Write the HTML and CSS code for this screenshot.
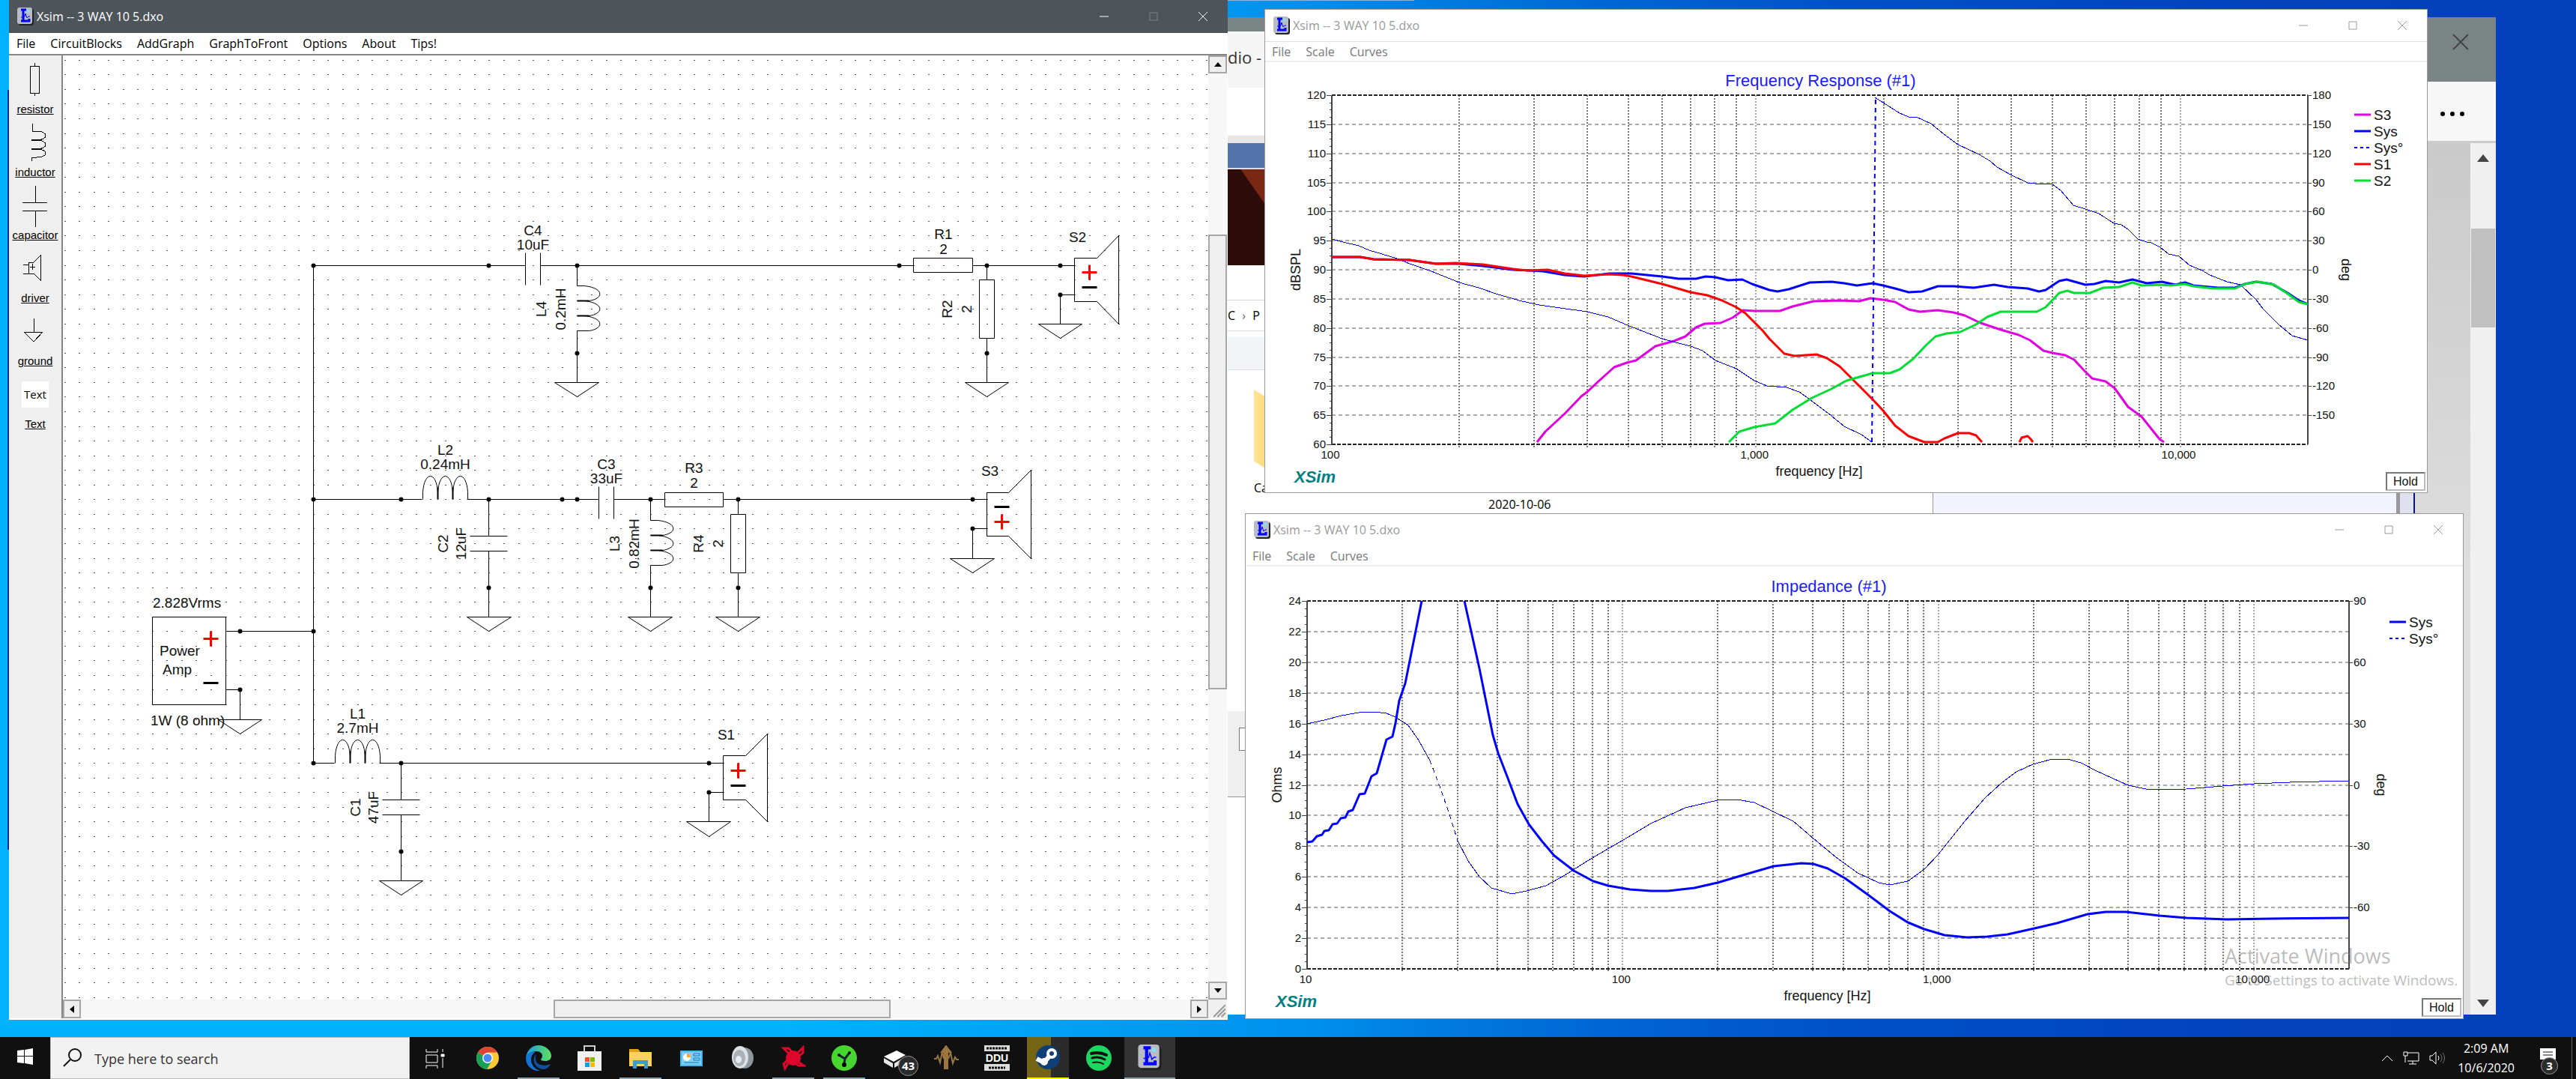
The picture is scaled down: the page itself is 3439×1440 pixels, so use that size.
FILE: index.html
```html
<!DOCTYPE html>
<html lang="en">
<head>
    <meta charset="UTF-8">
    <meta name="viewport" content="width=device-width, initial-scale=1.0">
    <title>Xsim -- 3 WAY 10 5.dxo</title>
    <link rel="stylesheet" href="styles.css">
</head>
<body>
    <!-- shared app icon -->
    <svg width="0" height="0" class="defs">
        <symbol id="xsim-icon" viewBox="0 0 22 24">
            <rect x="2" y="2" width="20" height="22" rx="3" fill="#222"/>
            <rect x="0" y="0" width="20" height="22" rx="3" fill="#b9bcc4"/>
            <path d="M5 3h7M8 3v15M5 18h11v-3" stroke="#00f" stroke-width="3" fill="none"/>
            <path d="M5 13h3l2-1 1-4 2 6 2-2h2" stroke="#00f" fill="none"/>
            <circle cx="15" cy="5" r="2" fill="#7fe3f5"/>
        </symbol>
    </svg>

    <div class="desktop">
        <!-- windows in the background -->
        <div class="browser">
            <div class="browser-title"><button class="browser-close" aria-label="Close"><svg width="24" height="24"><path d="M2 2l20 20M22 2L2 22" stroke="#444" stroke-width="2"/></svg></button></div>
            <div class="browser-bar"><button aria-label="More"><svg width="32" height="6"><circle cx="3" cy="3" r="3"/><circle cx="16" cy="3" r="3"/><circle cx="29" cy="3" r="3"/></svg></button></div>
            <div class="browser-page">
                <div class="browser-scroll">
                    <svg width="16" height="10"><path d="M0 10L8 0l8 10z" fill="#444"/></svg>
                    <div class="browser-thumb"></div>
                    <svg width="16" height="10"><path d="M0 0h16L8 10z" fill="#444"/></svg>
                </div>
            </div>
        </div>
        <div class="back-row">
            <div class="back-date">2020-10-06</div>
            <div class="back-pane"></div>
            <div class="back-edge"></div>
        </div>
        <div class="explorer">
            <div class="ex-title"></div>
            <div class="ex-tab">dio -</div>
            <div class="ex-white"></div>
            <div class="ex-blue"></div>
            <div class="ex-photo"></div>
            <div class="ex-gap"></div>
            <div class="ex-path">C <span>›</span> P</div>
            <div class="ex-head"></div>
            <div class="ex-files"><div class="ex-folder"></div>Ca</div>
            <div class="ex-dialog"><i></i></div>
            <div class="ex-rest"></div>
        </div>
        <div class="left-sliver"></div>
        <div class="top-sliver"></div>

        <!-- schematic editor -->
        <section class="window main-window">
            <header class="titlebar">
                <svg class="app-icon"><use href="#xsim-icon"/></svg>
                <span class="title">Xsim -- 3 WAY 10 5.dxo</span>
                <button aria-label="Minimize"><svg width="12" height="12"><path d="M0 6h12"/></svg></button>
                <button aria-label="Maximize" class="dim"><svg width="12" height="12"><path d="M1 1h10v10H1z"/></svg></button>
                <button aria-label="Close"><svg width="12" height="12"><path d="M0 0l12 12M12 0L0 12"/></svg></button>
            </header>
            <nav class="menu">
                <button>File</button>
                <button>CircuitBlocks</button>
                <button>AddGraph</button>
                <button>GraphToFront</button>
                <button>Options</button>
                <button>About</button>
                <button>Tips!</button>
            </nav>
            <div class="editor">
                <div class="toolbar">
                    <button class="tool">
                        <svg width="70" height="60"><path d="M28 11h12v36H28zM34 7v4M34 47v4"/></svg>
                        <span>resistor</span>
                    </button>
                    <button class="tool">
                        <svg width="70" height="60"><path d="M31 4v10h6c16 0 16 12 0 12h-7 7c16 0 16 12 0 12h-7 7c16 0 16 11 0 11h-7v5"/><path d="M30 26h12M30 38h12" stroke-width="2"/></svg>
                        <span>inductor</span>
                    </button>
                    <button class="tool">
                        <svg width="70" height="60"><path d="M35 3v22M18 25h33M18 36h33M35 36v22"/></svg>
                        <span>capacitor</span>
                    </button>
                    <button class="tool">
                        <svg width="70" height="60"><path d="M26 21h7l9-9v33l-9-9h-7zM19 24h7M19 36h7M28 27h7M31 23v8"/></svg>
                        <span>driver</span>
                    </button>
                    <button class="tool">
                        <svg width="70" height="60"><path d="M33 12v18M20 30h25L33 43z"/></svg>
                        <span>ground</span>
                    </button>
                    <button class="tool">
                        <em>Text</em>
                        <span>Text</span>
                    </button>
                </div>
                <svg class="canvas" id="schematic" viewBox="84 74 1529 1260" preserveAspectRatio="xMinYMin meet"></svg>
                <div class="scroll scroll-v">
                    <button aria-label="Up"><svg width="10" height="6"><path d="M0 6L5 0l5 6z"/></svg></button>
                    <div class="before"></div><div class="thumb"></div><div class="after"></div>
                    <button aria-label="Down"><svg width="10" height="6"><path d="M0 0h10L5 6z"/></svg></button>
                </div>
                <div class="scroll scroll-h">
                    <button aria-label="Left"><svg width="6" height="10"><path d="M6 0v10L0 5z"/></svg></button>
                    <div class="before"></div><div class="thumb"></div><div class="after"></div>
                    <button aria-label="Right"><svg width="6" height="10"><path d="M0 0v10l6-5z"/></svg></button>
                </div>
                <svg class="grip" viewBox="0 0 24 24"><path d="M7 22L22 7M12 22L22 12M17 22l5-5" stroke="#999" stroke-width="2"/></svg>
            </div>
        </section>

        <!-- graphs -->
        <section class="window graph-window freq-window">
            <header class="titlebar">
                <svg class="app-icon"><use href="#xsim-icon"/></svg>
                <span class="title">Xsim -- 3 WAY 10 5.dxo</span>
                <button aria-label="Minimize"><svg width="12" height="12"><path d="M0 6h12"/></svg></button>
                <button aria-label="Maximize"><svg width="12" height="12"><path d="M1 1h10v10H1z"/></svg></button>
                <button aria-label="Close"><svg width="12" height="12"><path d="M0 0l12 12M12 0L0 12"/></svg></button>
            </header>
            <nav class="menu">
                <button>File</button>
                <button>Scale</button>
                <button>Curves</button>
            </nav>
            <svg class="graph" id="freq" viewBox="0 0 1551 574" preserveAspectRatio="xMinYMin meet"></svg>
            <button class="hold">Hold</button>
        </section>

        <section class="window graph-window imp-window">
            <header class="titlebar">
                <svg class="app-icon"><use href="#xsim-icon"/></svg>
                <span class="title">Xsim -- 3 WAY 10 5.dxo</span>
                <button aria-label="Minimize"><svg width="12" height="12"><path d="M0 6h12"/></svg></button>
                <button aria-label="Maximize"><svg width="12" height="12"><path d="M1 1h10v10H1z"/></svg></button>
                <button aria-label="Close"><svg width="12" height="12"><path d="M0 0l12 12M12 0L0 12"/></svg></button>
            </header>
            <nav class="menu">
                <button>File</button>
                <button>Scale</button>
                <button>Curves</button>
            </nav>
            <svg class="graph" id="imp" viewBox="0 0 1625 603" preserveAspectRatio="xMinYMin meet"></svg>
            <button class="hold">Hold</button>
        </section>

        <div class="watermark">
            <strong>Activate Windows</strong>
            <span>Go to Settings to activate Windows.</span>
        </div>
    </div>

    <footer class="taskbar">
        <button class="start" aria-label="Start"><svg width="21" height="22" fill="#fff"><path d="M0 3l9-1v8H0zM10 2l11-2v10H10zM0 11h9v9l-9-1zM10 11h11v11l-11-2z"/></svg></button>
        <label class="search">
            <svg width="26" height="26" fill="none" stroke="#111" stroke-width="2"><circle cx="16" cy="9" r="8"/><path d="M10 15L1 24"/></svg>
            <input type="text" placeholder="Type here to search">
        </label>
        <button class="task" aria-label="Task View"><svg width="34" height="34" fill="none" stroke="#fff" stroke-width="1"><path d="M3 5v4h15V5M3 13h15v10H3zM3 31v-4h15v4M25 5v4M25 17v13" /><path d="M23 12h4v3h-4z" fill="#fff"/></svg></button>
        <button class="task" aria-label="Chrome">
            <svg width="34" height="34"><circle cx="17" cy="17" r="15" fill="#fbc934"/><path d="M17 17L4 9.500A15 15 0 0 1 30 9.500H17z" fill="#dc4437"/><path d="M4 9.500A15 15 0 0 0 16 32l7-12-6-3z" fill="#1a9f57"/><circle cx="17" cy="17" r="7" fill="#fff"/><circle cx="17" cy="17" r="5.500" fill="#4a8af4"/></svg>
        </button>
        <button class="task open" aria-label="Edge">
            <svg width="34" height="34">
                <defs><linearGradient id="eg"><stop offset="0" stop-color="#1a9be8"/><stop offset="1" stop-color="#5fe05a"/></linearGradient></defs>
                <path d="M0 17C1 7 8 0 17 0s17 7 17 14c0 5-4 7-8 7s-6-1-6-2 2-2 2-5-3-6-8-6C7 8 1 12 0 17z" fill="url(#eg)"/>
                <path d="M0 17C1 11 7 8 13 9c-4 2-6 6-6 10 0 7 5 13 12 15C8 35 0 27 0 17z" fill="#1374d4"/>
                <path d="M14 12c-7 5-3 20 10 20 4 0 7-3 9-7-9 4-20 1-20-7 0-2 0-4 1-6z" fill="#0f4f9e"/>
            </svg>
        </button>
        <button class="task" aria-label="Microsoft Store">
            <svg width="34" height="34"><path d="M10 9V1h14v8" fill="none" stroke="#ccc" stroke-width="2"/><path d="M1 8h32v26H1z" fill="#f1f1f1"/><path d="M11 16h6v6h-6z" fill="#f25022"/><path d="M18 16h6v6h-6z" fill="#7fba00"/><path d="M11 23h6v6h-6z" fill="#00a4ef"/><path d="M18 23h6v6h-6z" fill="#ffb900"/></svg>
        </button>
        <button class="task open" aria-label="File Explorer">
            <svg width="34" height="34"><path d="M2 5h12l3 4H2z" fill="#e2a014"/><path d="M2 9h30v19H2z" fill="#fdd15e"/><path d="M7 31V20h20v11h-5v-6H12v6z" fill="#3d9bdc"/></svg>
        </button>
        <button class="task" aria-label="Control Panel">
            <svg width="34" height="34"><path d="M2 7h30v21H2z" fill="#48b5ea"/><path d="M4 9h26v17H4z" fill="#7cd0f5"/><circle cx="11" cy="16" r="5" fill="#fff"/><path d="M11 16v-5a5 5 0 0 1 5 5z" fill="#f6a623"/><path d="M20 11h8v3h-8zM20 17h8v3h-8zM7 23h20" fill="none" stroke="#1879b8"/></svg>
        </button>
        <button class="task" aria-label="Sound">
            <svg width="34" height="34"><ellipse cx="20" cy="17" rx="12" ry="14" fill="#8f979e"/><ellipse cx="14" cy="16" rx="11" ry="15" fill="#dde1e4"/><ellipse cx="13" cy="17" rx="8" ry="11" fill="#aab1b7"/><ellipse cx="12" cy="19" rx="4" ry="5" fill="#e9ecee"/></svg>
        </button>
        <button class="task open" aria-label="Audio tool">
            <svg width="34" height="34" fill="none" stroke="#e0052d" stroke-width="3"><circle cx="17" cy="17" r="10" fill="#e0052d" stroke="none"/><path d="M11 11L4 4h7l4 5M22 11l8-8v7l-5 4M23 22l8 5h-7l-5-3M11 22l-5 9-2-6 5-5"/></svg>
        </button>
        <button class="task open" aria-label="Driver tool">
            <svg width="34" height="34"><circle cx="17" cy="17" r="17" fill="#46d62f"/><path d="M10 13l8 5 6-8M18 18l-1 7" stroke="#123" stroke-width="3" fill="none"/><circle cx="10" cy="13" r="2"/><circle cx="24" cy="10" r="2"/><circle cx="17" cy="26" r="3"/></svg>
        </button>
        <button class="task" aria-label="Drive">
            <svg width="34" height="34"><path d="M2 15l17-8 12 6-16 9z" fill="#fff"/><path d="M2 17l12 7v6L2 23zM16 24l15-9v6l-15 9z" fill="#e6e6e6"/></svg>
            <b class="badge">43</b>
        </button>
        <button class="task" aria-label="Equalizer">
            <svg width="34" height="34" fill="none" stroke="#9c7541" stroke-width="2"><path d="M1 18h3l2-4 3 9 3-15 2 10M20 18l3-8 3 14 3-8 2 3h3"/><path d="M17 32V6" stroke-width="6"/><path d="M11 9l6-8 6 8z" fill="#9c7541"/></svg>
        </button>
        <button class="task" aria-label="DDU">
            <svg width="34" height="34"><path d="M0 0h34v34H0z" fill="#ddd"/><path d="M0 8h34v17H0z" fill="#111"/><text x="17" y="22" class="ddu">DDU</text><path d="M3 4h28M6 30h22" stroke="#111" stroke-width="3" stroke-dasharray="3 1"/></svg>
        </button>
        <button class="task steam" aria-label="Steam">
            <svg width="34" height="34"><circle cx="17" cy="17" r="16" fill="#0e3f77"/><path d="M2 19l10 5 9-11" stroke="#fff" stroke-width="6" fill="none"/><circle cx="12" cy="23" r="5" fill="#fff"/><circle cx="22" cy="12" r="7" fill="#fff"/><circle cx="22" cy="12" r="3" fill="#0e3f77"/></svg>
        </button>
        <button class="task" aria-label="Spotify">
            <svg width="34" height="34" fill="none" stroke="#111" stroke-linecap="round"><circle cx="17" cy="17" r="17" fill="#1ed760" stroke="none"/><path d="M7 11c7-2 14-1 20 2" stroke-width="4"/><path d="M8 17c6-2 12-1 17 2" stroke-width="3"/><path d="M9 23c5-1 10-1 14 2" stroke-width="2"/></svg>
        </button>
        <button class="task current" aria-label="XSim"><svg width="34" height="34"><use href="#xsim-icon" width="34" height="34"/></svg></button>

        <div class="tray">
            <svg width="16" height="10"><path d="M1 9l7-7 7 7"/></svg>
            <svg width="22" height="18"><path d="M6 2h15v11H6M1 1h5v5H1zM3 6v9M13 13v4M8 17h10"/></svg>
            <svg width="22" height="18"><path d="M1 6h3l5-5v16l-5-5H1zM12 6q2 3 0 6"/><path d="M15 4q4 5 0 10M18 2q5 7 0 14" stroke="#777"/></svg>
            <div class="clock"><span>2:09 AM</span><span>10/6/2020</span></div>
            <button class="notes" aria-label="Notifications"><svg width="24" height="24"><path d="M1 1h21v15h-6v6l-6-6H1z" fill="#fff" stroke="none"/><path d="M5 6h13M5 10h13" stroke="#111"/></svg><b class="badge">3</b></button>
        </div>
    </footer>
    <script src="script.js"></script>
</body>
</html>
```
FILE: styles.css
```css
:root {
    --ui-font: "Open Sans", "Noto Sans", sans-serif;
    --draw-font: "Liberation Sans", Arial, sans-serif;
    --taskbar: #101010;
}

* {
    box-sizing: border-box;
}

body {
    margin: 0;
    height: 100vh;
    display: flex;
    flex-direction: column;
    overflow: hidden;
    font-family: var(--ui-font);
    font-size: 16px;
}

button {
    font: inherit;
    color: inherit;
    padding: 0;
    border: none;
    background: none;
}

.defs {
    position: absolute;
}

.desktop {
    position: relative;
    flex: 1;
    overflow: hidden;
    background: linear-gradient(to right, #00b2ff 0%, #00b2ff 30%, #0092ee 50%, #006cd8 60%, #0050c8 72%, #0242bd 88%, #0340bb 100%);
}

/* background windows */
.browser {
    position: absolute;
    left: 1639px;
    right: 107px;
    top: 23px;
    bottom: 30px;
    display: flex;
    flex-direction: column;
    background: #dedede;
}

.browser-title {
    height: 86px;
    background: #7b8485;
    display: flex;
    justify-content: flex-end;
    align-items: flex-start;
}

.browser-close {
    margin: 21px 35px;
    height: 24px;
}

.browser-bar {
    height: 82px;
    background: #f7f7f7;
    border-bottom: 3px solid #ccc;
    display: flex;
    justify-content: flex-end;
    align-items: center;
    padding-right: 42px;
}

.browser-page {
    flex: 1;
    display: flex;
    justify-content: flex-end;
    background: linear-gradient(#cacaca, #dedede 50%);
}

.browser-scroll {
    width: 34px;
    background: #f0f0f0;
    display: flex;
    flex-direction: column;
    align-items: center;
    padding: 15px 0 10px;
}

.browser-thumb {
    width: 32px;
    height: 132px;
    margin: 89px 0 auto;
    background: #c0c0c0;
}

.back-row {
    position: absolute;
    left: 1639px;
    right: 215px;
    top: 650px;
    height: 60px;
    display: flex;
}

.back-date {
    width: 942px;
    padding: 12px 0 0 348px;
    background: #fff;
    border-right: 1px solid #999;
}

.back-pane {
    flex: 1;
    background: #f3f3fe;
    border-right: 5px solid #999;
}

.back-edge {
    width: 20px;
    background: #e0e1f0;
    border-right: 2px solid #00148c;
}

.explorer {
    position: absolute;
    left: 1639px;
    top: 23px;
    bottom: 30px;
    width: 52px;
    display: flex;
    flex-direction: column;
    background: #fff;
    overflow: hidden;
    white-space: nowrap;
}

.ex-title {
    height: 19px;
    background: #7b8485;
}

.ex-tab {
    height: 75px;
    padding-top: 16px;
    line-height: 36px;
    font-size: 22px;
    color: #333;
    background: #f5f5f5;
}

.ex-white {
    height: 74px;
    border-bottom: 10px solid #e6e6e6;
}

.ex-blue {
    height: 35px;
    background: #5374ab;
    border-bottom: 2px solid #dde;
}

.ex-photo {
    height: 128px;
    background: linear-gradient(55deg, #2e0c0a 75%, #7a2814 76%);
}

.ex-gap {
    height: 46px;
}

.ex-path {
    height: 42px;
    line-height: 40px;
    border: solid #d5d5d5;
    border-width: 1px 0;
}

.ex-path span {
    color: #666;
    padding: 0 5px;
}

.ex-head {
    height: 52px;
    border-top: 8px solid #fff;
    border-bottom: 1px solid #ddd;
    background: #f2f4f8;
}

.ex-files {
    height: 455px;
    padding: 26px 0 0 35px;
}

.ex-folder {
    height: 106px;
    margin-bottom: 14px;
    background: linear-gradient(to right, #ffe595, #fbd87a);
    clip-path: polygon(0 0, 100% 10%, 100% 100%, 0 90%);
}

.ex-dialog {
    height: 115px;
    background: #efefef;
    border-bottom: 1px solid #999;
    padding: 22px 0 0 15px;
}

.ex-dialog i {
    display: block;
    height: 31px;
    background: #fff;
    border: 1px solid #777;
}

.left-sliver {
    position: absolute;
    left: 10px;
    top: 120px;
    bottom: 250px;
    width: 2px;
    background: #0a2a8c;
}

.top-sliver {
    position: absolute;
    left: 1639px;
    top: 0;
    width: 249px;
    height: 1px;
    background: #8fb6d6;
}

/* windows */
.window {
    position: absolute;
    display: flex;
    flex-direction: column;
    background: #fff;
}

.main-window {
    left: 12px;
    right: 1800px;
    top: 0;
    bottom: 23px;
}

.freq-window {
    left: 1688px;
    right: 198px;
    top: 12px;
    bottom: 726px;
}

.imp-window {
    left: 1662px;
    right: 150px;
    top: 685px;
    bottom: 24px;
}

.graph-window {
    border: 1px solid #9a9a9a;
}

.titlebar {
    flex: none;
    height: 44px;
    display: flex;
    align-items: center;
    background: #4d555b;
    color: #fff;
}

.titlebar .title {
    flex: 1;
}

.titlebar button {
    width: 66px;
    height: 100%;
}

.titlebar button svg {
    fill: none;
    stroke: currentColor;
    overflow: visible;
}

.titlebar .dim {
    color: #7b8287;
}

.app-icon {
    width: 22px;
    height: 24px;
    margin: 0 4px 0 11px;
}

.graph-window .titlebar {
    height: 43px;
    background: #fff;
    color: #999;
    border-bottom: 1px solid #ddd;
}

.imp-window .titlebar {
    border-color: #fff;
}

.menu {
    flex: none;
    height: 28px;
    display: flex;
    align-items: center;
    padding-left: 10px;
    gap: 20px;
}

.graph-window .menu {
    height: 27px;
    padding-left: 9px;
    color: #777;
    border-bottom: 2px solid #eee;
}

.editor {
    flex: 1;
    min-height: 0;
    display: grid;
    grid-template-columns: 72px 1fr 25px;
    grid-template-rows: 1fr 25px;
    border: solid #868686;
    border-width: 2px 0 0;
    margin-right: 1px;
    margin-bottom: 2px;
}

.toolbar {
    grid-row: 1 / 3;
    background: #efefef;
    border-right: 2px solid #868686;
    padding-top: 3px;
}

.tool {
    display: flex;
    flex-direction: column;
    align-items: center;
    width: 100%;
    height: 84px;
    font-family: var(--draw-font);
    font-size: 15px;
}

.tool svg {
    fill: none;
    stroke: #000;
    shape-rendering: crispEdges;
}

.tool span {
    line-height: 18px;
    text-decoration: underline;
}

.tool em {
    width: 36px;
    height: 35px;
    margin: 12px 0 13px;
    line-height: 34px;
    font-style: normal;
    font-family: var(--ui-font);
    background: #fff;
}

.canvas {
    width: 100%;
    height: 100%;
    fill: none;
    stroke: #000;
    stroke-width: 1;
    font: 19px var(--draw-font);
}

.canvas text {
    fill: #111;
    stroke: none;
}

.canvas .mid {
    text-anchor: middle;
}

.canvas .grid-dots {
    stroke: #555;
    shape-rendering: crispEdges;
}

.canvas .plus {
    stroke: #f00;
    stroke-width: 3;
}

.canvas .minus {
    stroke-width: 3;
}

.canvas .node {
    fill: #000;
    stroke: none;
}

.scroll {
    display: flex;
    background: #f7f7f7;
}

.scroll-v {
    flex-direction: column;
}

.scroll-h {
    grid-column: 2;
}

.scroll button,
.thumb {
    background: #efefef;
    border: 2px solid #a6a6a6;
}

.scroll button {
    flex: 0 0 24px;
    display: flex;
    align-items: center;
    justify-content: center;
}

.scroll-v .before { flex: 216; }
.scroll-v .thumb { flex: 606; }
.scroll-v .after { flex: 392; }
.scroll-h .before { flex: 633; }
.scroll-h .thumb { flex: 448; }
.scroll-h .after { flex: 401; }

.grip {
    background: #f0f0f0;
}

/* graphs */
.graph {
    flex: 1;
    min-height: 0;
    width: 100%;
    fill: none;
    font: 15px var(--draw-font);
}

.graph text {
    fill: #111;
}

.graph .graph-title {
    font-size: 22px;
    fill: #1a1aff;
    text-anchor: middle;
}

.graph .axis-title {
    font-size: 18px;
    text-anchor: middle;
}

.graph .x-label {
    text-anchor: middle;
}

.graph .y-label {
    text-anchor: end;
}

.graph .legend {
    font-size: 19px;
}

.graph .brand {
    font-size: 22px;
    font-weight: bold;
    font-style: italic;
    fill: #008080;
}

.grid-h,
.grid-v,
.frame,
.frame-dash {
    shape-rendering: crispEdges;
}

.grid-h {
    stroke: #aaa;
    stroke-width: 2;
    stroke-dasharray: 5 4;
}

.grid-v {
    stroke: #777;
    stroke-width: 2;
    stroke-dasharray: 2 2;
}

.grid-v.decade {
    stroke: #aaa;
}

.frame {
    stroke: #444;
    stroke-width: 2;
}

.frame.tick {
    stroke-width: 1;
}

.frame-dash {
    stroke: #222;
    stroke-width: 2;
    stroke-dasharray: 5 2;
}

.curve {
    stroke-width: 3;
    stroke-linejoin: round;
}

.curve.thin {
    stroke-width: 1;
    shape-rendering: crispEdges;
}

.curve.dashed {
    stroke-dasharray: 6 5;
}

.curve.wrap {
    stroke-width: 2;
}

.hold {
    position: absolute;
    right: 2px;
    bottom: 2px;
    width: 53px;
    height: 25px;
    border: 2px solid;
    border-color: #777 #bbb #bbb #777;
    background: #fff;
    color: #111;
    font-family: var(--draw-font);
}

.watermark {
    position: absolute;
    right: 156px;
    bottom: 62px;
    display: flex;
    flex-direction: column;
    width: 313px;
    color: rgba(120, 120, 120, 0.5);
    white-space: nowrap;
    font-size: 19px;
    line-height: 28px;
}

.watermark strong {
    font-size: 27px;
    font-weight: normal;
    line-height: 36px;
}

/* taskbar */
.taskbar {
    flex: none;
    height: 56px;
    display: flex;
    align-items: stretch;
    background: var(--taskbar);
    color: #fff;
}

.start {
    width: 67px;
}

.search {
    width: 480px;
    display: flex;
    align-items: center;
    gap: 16px;
    padding-left: 16px;
    background: #f2f2f2;
    border: 1px solid #bbb;
}

.search input {
    flex: 1;
    min-width: 0;
    border: none;
    outline: none;
    background: none;
    padding: 2px 0 0;
    font: 18px var(--ui-font);
}

.search input::placeholder {
    color: #333;
    opacity: 1;
}

.task {
    position: relative;
    width: 68px;
    display: flex;
    align-items: center;
    justify-content: center;
}

.search + .task {
    margin-left: 2px;
}

.task.open::after {
    content: "";
    position: absolute;
    left: 6px;
    right: 6px;
    bottom: 0;
    height: 2px;
    background: #8fa3b0;
}

.task.steam {
    width: 56px;
    margin: 0 6px;
    background: linear-gradient(to right, #756414 58%, #2b2b2b 58%);
    border-bottom: 2px solid #fff000;
}

.task.current {
    background: #333;
    border-bottom: 2px solid #8fa3b0;
}

.ddu {
    fill: #fff;
    font: bold 14px var(--draw-font);
    text-anchor: middle;
}

.badge {
    position: absolute;
    right: 3px;
    bottom: 4px;
    width: 27px;
    height: 27px;
    border: 1px solid #999;
    border-radius: 50%;
    background: #2b2b2b;
    font-size: 15px;
    line-height: 25px;
    text-align: center;
}

.tray {
    margin-left: auto;
    display: flex;
    align-items: center;
    gap: 13px;
}

.tray svg {
    fill: none;
    stroke: #fff;
}

.clock {
    display: flex;
    flex-direction: column;
    align-items: center;
    line-height: 26px;
    margin-left: 3px;
}

.notes {
    position: relative;
    width: 64px;
    height: 100%;
    margin-right: 5px;
    border-right: 1px solid #666;
}

.notes .badge {
    right: 18px;
    bottom: 6px;
    width: 23px;
    height: 23px;
    line-height: 21px;
}
```
FILE: script.js
```js
const NS = 'http://www.w3.org/2000/svg';

function add(parent, tag, attrs, text) {
    const el = document.createElementNS(NS, tag);
    for (const k in attrs) el.setAttribute(k, attrs[k]);
    if (text !== undefined) el.textContent = text;
    parent.appendChild(el);
    return el;
}

/* ---------- schematic ---------- */
const board = document.getElementById('schematic');
const STEP = 19.55;
const gx = i => Math.round(86.5 + STEP * i) - 0.5;
const gy = j => Math.round(80.8 + STEP * j) - 0.5;

let dots = '';
for (let j = 0; j <= 64; j++) {
    for (let i = 0; i <= 78; i++) {
        dots += `M${gx(i) - 0.5} ${gy(j)}h2`;
    }
}
add(board, 'path', { d: dots, class: 'grid-dots' });

function wire(...pts) {
    let d = '';
    for (let k = 0; k < pts.length; k += 2) d += (k ? 'L' : 'M') + gx(pts[k]) + ' ' + gy(pts[k + 1]);
    add(board, 'path', { d });
}

function node(i, j) {
    add(board, 'circle', { cx: gx(i), cy: gy(j), r: 3, class: 'node' });
}

function label(x, y, text, cls) {
    add(board, 'text', { x, y, class: cls || 'mid' }, text);
}

function vlabel(x, y, text) {
    add(board, 'text', { class: 'mid', transform: `translate(${x} ${y}) rotate(-90)` }, text);
}

function ground(i, j) {
    wire(i - 1.5, j, i + 1.5, j, i, j + 1, i - 1.5, j);
}

function plus(i, j) {
    add(board, 'path', { d: `M${gx(i) - 10} ${gy(j)}h20M${gx(i)} ${gy(j) - 10}v20`, class: 'plus' });
}

function minus(i, j) {
    add(board, 'path', { d: `M${gx(i) - 10} ${gy(j)}h20`, class: 'minus' });
}

// vertical parts hang from (i, j) and end in a ground
function drop(i, j) {
    node(i, j);
    node(i, j + 6);
    wire(i, j + 6, i, j + 8);
    ground(i, j + 8);
}

function capH(i, j, name, value) {
    const y = gy(j);
    add(board, 'path', { d: `M${gx(i - 0.5)} ${y - 17}v43M${gx(i + 0.5)} ${y - 17}v43` });
    label(gx(i), y - 41, name);
    label(gx(i), y - 22, value);
}

function capV(i, j, name, value) {
    drop(i, j);
    wire(i, j, i, j + 2.5);
    wire(i, j + 3.5, i, j + 6);
    add(board, 'path', { d: `M${gx(i) - 25} ${gy(j + 2.5)}h50M${gx(i) - 25} ${gy(j + 3.5)}h50` });
    vlabel(gx(i) - 55, gy(j + 3), name);
    vlabel(gx(i) - 31, gy(j + 3), value);
}

function coilH(i, j, name, value) {
    const x = gx(i), y = gy(j);
    let d = `M${x - 30} ${y}`;
    for (let k = 0; k < 3; k++) d += 'v-10c2 -28 18 -28 20 0v10';
    add(board, 'path', { d });
    add(board, 'path', { d: `M${x - 10} ${y}v-16M${x + 10} ${y}v-16`, 'stroke-width': 2 });
    label(x, y - 60, name);
    label(x, y - 41, value);
}

function coilV(i, j, name, value) {
    const x = gx(i), y = gy(j + 1.4);
    drop(i, j);
    wire(i, j, i, j + 1.4);
    let d = `M${x} ${y}`;
    for (let k = 0; k < 3; k++) d += 'h10c26 3 26 17 6 20h-16';
    add(board, 'path', { d: d + `V${gy(j + 6)}` });
    add(board, 'path', { d: `M${x} ${y + 20}h16M${x} ${y + 40}h16`, 'stroke-width': 2 });
    vlabel(x - 42, gy(j + 3), name);
    vlabel(x - 16, gy(j + 3), value);
}

function resH(i, j, name, value) {
    wire(i, j - 0.5, i + 4, j - 0.5, i + 4, j + 0.5, i, j + 0.5, i, j - 0.5);
    label(gx(i + 2), gy(j) - 36, name);
    label(gx(i + 2), gy(j) - 16, value);
}

function resV(i, j, name, value) {
    drop(i, j);
    wire(i, j, i, j + 1);
    wire(i, j + 5, i, j + 6);
    wire(i - 0.5, j + 1, i + 0.5, j + 1, i + 0.5, j + 5, i - 0.5, j + 5, i - 0.5, j + 1);
    vlabel(gx(i) - 47, gy(j + 3), name);
    vlabel(gx(i) - 21, gy(j + 3), value);
}

function speaker(i, j, name, inverted) {
    node(i - 1, j);
    node(i - 1, j + 2);
    wire(i - 1, j, i, j);
    wire(i, j + 2, i - 1, j + 2, i - 1, j + 4);
    ground(i - 1, j + 4);
    wire(i, j - 0.5, i + 1.5, j - 0.5, i + 3, j - 2, i + 3, j + 4, i + 1.5, j + 2.5, i, j + 2.5, i, j - 0.5);
    plus(i + 1, j + (inverted ? 1.5 : 0.5));
    minus(i + 1, j + (inverted ? 0.5 : 1.5));
    label(gx(i) + 4, gy(j) - 32, name);
}

// power amp
wire(6, 38, 11, 38, 11, 44, 6, 44, 6, 38);
plus(10, 39.5);
minus(10, 42.5);
wire(11, 39, 17, 39);
wire(11, 43, 12, 43, 12, 45);
node(12, 39);
node(12, 43);
node(17, 39);
ground(12, 45);
label(204, 811, '2.828Vrms', 'start');
label(213, 875, 'Power', 'start');
label(217, 900, 'Amp', 'start');
label(201, 968, '1W (8 ohm)', 'start');
wire(17, 14, 17, 48);

// tweeter branch
node(17, 14);
node(29, 14);
wire(17, 14, 31.5, 14);
capH(32, 14, 'C4', '10uF');
wire(32.5, 14, 58, 14);
coilV(35, 14, 'L4', '0.2mH');
node(57, 14);
resH(58, 14, 'R1', '2');
wire(62, 14, 68, 14);
resV(63, 14, 'R2', '2');
speaker(69, 14, 'S2');

// midrange branch
node(17, 30);
node(23, 30);
wire(17, 30, 24.45, 30);
coilH(26, 30, 'L2', '0.24mH');
wire(27.5, 30, 36.5, 30);
capV(29, 30, 'C2', '12uF');
node(34, 30);
node(35, 30);
capH(37, 30, 'C3', '33uF');
wire(37.5, 30, 41, 30);
coilV(40, 30, 'L3', '0.82mH');
resH(41, 30, 'R3', '2');
wire(45, 30, 62, 30);
resV(46, 30, 'R4', '2');
speaker(63, 30, 'S3', true);

// woofer branch
node(17, 48);
wire(17, 48, 18.45, 48);
coilH(20, 48, 'L1', '2.7mH');
wire(21.5, 48, 44, 48);
capV(23, 48, 'C1', '47uF');
speaker(45, 48, 'S1');

/* ---------- graphs ---------- */
function graph(o) {
    const svg = document.getElementById(o.id);
    const { x: L, y: T, w, h } = o;
    const R = L + w, B = T + h;
    const line = (x1, y1, x2, y2, cls) =>
        add(svg, 'line', { x1: Math.round(x1), y1: Math.round(y1), x2: Math.round(x2), y2: Math.round(y2), class: cls });
    const px = f => L + w * Math.log10(f / o.fMin) / Math.log10(20000 / o.fMin);

    for (let k = 1; k < 12; k++) line(L, T + h * k / 12, R, T + h * k / 12, 'grid-h');
    for (let dec = o.fMin; dec <= 10000; dec *= 10) {
        for (let m = 1; m < 10; m++) {
            const f = dec * m;
            if (f >= 20000) break;
            if (f > o.fMin) line(px(f), T, px(f), B + 4, m === 1 ? 'grid-v decade' : 'grid-v');
        }
        add(svg, 'text', { x: px(dec) - 2, y: B + 19, class: 'x-label' }, dec.toLocaleString('en-US'));
    }
    line(L, T, R, T, 'frame-dash');
    line(L, B, R, B, 'frame-dash');
    line(L, T, L, B, 'frame');
    line(R, T, R, B, 'frame');
    for (let k = 0; k <= 48; k++) line(L - (k % 4 ? 3 : 7), T + h * k / 48, L, T + h * k / 48, 'frame tick');

    for (let k = 0; k <= 12; k++) {
        const y = Math.round(T + h * k / 12) + 5;
        add(svg, 'text', { x: L - 8, y, class: 'y-label' }, o.top - k * o.step);
        if (k % o.degEvery === 0 && k < 12) {
            add(svg, 'text', { x: R + 6, y }, o.degTop - 30 * k / o.degEvery);
            line(R, y - 5, R + 5, y - 5, 'frame tick');
        }
    }

    const plot = add(svg, 'g', { transform: `translate(${L} ${T})` });
    for (const c of o.curves) {
        add(plot, 'polyline', { points: c.pts, stroke: c.color, class: 'curve ' + (c.cls || '') });
    }

    add(svg, 'text', { x: L + w / 2 + 1, y: T - 12, class: 'graph-title' }, o.title);
    add(svg, 'text', { x: L + w / 2 - 1, y: B + 42, class: 'axis-title' }, 'frequency [Hz]');
    add(svg, 'text', { class: 'axis-title', transform: `translate(${L - o.pad + 7} ${T + h / 2}) rotate(-90)` }, o.unit);
    add(svg, 'text', { class: 'axis-title', transform: `translate(${R + o.pad - 4} ${T + h / 2}) rotate(90)` }, 'deg');
    add(svg, 'text', { x: L - o.pad - 1, y: B + 51, class: 'brand' }, 'XSim');

    o.legend.forEach(([name, color, dashed], k) => {
        const y = T + o.legendTop + k * 22;
        add(svg, 'line', { x1: R + o.legendLeft, y1: y, x2: R + o.legendLeft + 22, y2: y, stroke: color, 'stroke-width': dashed ? 2 : 3, 'stroke-dasharray': dashed ? '4 4' : 'none' });
        add(svg, 'text', { x: R + o.legendLeft + 26, y: y + 7, class: 'legend' }, name);
    });
}

graph({
    id: 'freq', x: 89, y: 44, w: 1303, h: 466, pad: 49,
    fMin: 100, top: 120, step: 5, degTop: 180, degEvery: 1,
    title: 'Frequency Response (#1)', unit: 'dBSPL',
    legendLeft: 62, legendTop: 26,
    legend: [['S3', '#e000e0'], ['Sys', '#0000ff'], ['Sys°', '#0000ff', true], ['S1', '#ff0000'], ['S2', '#00dd33']],
    curves: [
        { color: '#e000e0', pts: '274,463 285,449 311,425 333,402 341,396 357,381 377,363 394,357 406,354 432,335 457,328 472,322 486,310 498,305 519,304 535,297 549,287 564,288 598,288 615,282 643,275 678,274 704,275 719,271 736,273 752,276 770,286 785,289 809,287 830,290 845,294 866,304 893,313 917,320 932,327 950,341 962,344 979,347 991,353 1003,366 1015,378 1033,382 1045,391 1063,416 1081,429 1105,459 1111,463' },
        { color: '#0000ff', pts: '0,216 38,216 56,219 104,220 139,225 170,225 202,228 242,233 282,235 311,240 337,242 371,238 400,238 441,242 463,245 486,245 499,242 512,243 529,247 548,246 561,252 584,260 595,262 610,259 638,250 667,249 684,251 701,254 722,251 736,254 752,258 770,263 788,262 809,255 830,255 857,257 884,253 902,256 929,258 944,262 953,260 971,248 981,246 1006,253 1018,252 1033,248 1051,250 1069,246 1088,251 1108,249 1126,253 1139,250 1150,254 1183,257 1206,257 1219,252 1234,249 1255,252 1276,264 1291,274 1303,279' },
        { color: '#0000ff', cls: 'thin', pts: '0,192 15,196 36,201 50,207 67,212 87,218 104,225 133,235 170,250 196,257 222,266 254,275 277,280 305,284 341,289 369,296 397,308 441,325 455,329 479,335 495,341 512,354 540,365 564,381 581,388 607,390 624,396 638,406 667,428 684,442 707,453 721,463' },
        { color: '#0000ff', cls: 'dashed wrap', pts: '721,463 726,3' },
        { color: '#0000ff', cls: 'thin', pts: '725,3 736,10 758,24 770,29 780,29 800,38 817,52 836,66 864,79 879,88 888,96 906,106 929,117 939,118 962,119 973,127 990,147 1006,152 1024,158 1044,171 1054,173 1063,179 1076,192 1088,196 1094,197 1106,203 1117,212 1131,215 1145,227 1162,234 1172,240 1195,249 1213,253 1234,273 1243,285 1252,294 1264,306 1282,321 1303,327' },
        { color: '#ff0000', pts: '0,216 38,216 56,219 104,220 139,225 165,224 202,226 242,232 262,234 288,233 311,238 337,241 369,239 389,240 400,242 441,252 455,256 479,263 501,267 521,274 540,283 552,291 565,304 575,314 584,325 604,345 618,348 647,346 661,351 678,362 696,380 722,406 736,421 752,441 770,455 791,463 809,463 818,458 836,451 851,451 860,454 868,463' },
        { color: '#ff0000', pts: '918,463 921,457 929,455 933,459 936,463' },
        { color: '#00dd33', pts: '530,463 544,449 564,443 592,438 615,420 641,404 667,392 687,381 722,371 745,371 758,366 776,352 794,333 806,322 821,318 839,316 860,306 875,296 893,289 941,289 953,283 971,264 982,261 991,264 1012,264 1030,257 1051,256 1069,250 1081,254 1105,253 1120,254 1139,252 1150,255 1177,258 1206,258 1219,252 1237,249 1258,253 1276,265 1291,276 1303,279' }
    ]
});

graph({
    id: 'imp', x: 82, y: 46, w: 1391, h: 491, pad: 41,
    fMin: 10, top: 24, step: 2, degTop: 90, degEvery: 2,
    title: 'Impedance (#1)', unit: 'Ohms',
    legendLeft: 54, legendTop: 28,
    legend: [['Sys', '#0000ff'], ['Sys°', '#0000ff', true]],
    curves: [
        { color: '#0000ff', pts: '0,322 7,321 13,314 20,312 23,307 29,306 34,298 40,297 45,290 51,289 55,281 61,279 70,258 77,257 86,234 93,230 106,185 114,181 118,163 123,133 131,110 141,60 153,0' },
        { color: '#0000ff', pts: '210,0 230,90 248,179 255,203 267,234 281,271 296,298 313,320 330,340 356,360 382,374 402,380 431,385 459,387 482,387 517,383 548,376 585,365 623,354 660,350 676,351 695,357 718,370 750,393 778,414 802,429 824,438 851,446 881,449 908,448 935,445 971,437 1001,430 1042,418 1066,415 1093,415 1138,420 1174,423 1228,425 1288,424 1391,423' },
        { color: '#0000ff', cls: 'thin', pts: '0,164 23,159 46,153 69,149 89,148 106,150 118,155 135,166 149,186 164,213' },
        { color: '#0000ff', cls: 'thin dashed', pts: '164,213 178,250 189,282 201,320' },
        { color: '#0000ff', cls: 'thin', pts: '201,320 215,347 230,368 246,383 273,391 293,387 319,380 344,366 379,344 422,319 459,297 505,276 548,266 574,265 597,269 620,280 649,294 676,317 706,342 735,363 763,376 778,379 802,374 824,358 842,339 878,294 905,263 927,243 947,228 969,218 995,211 1015,211 1033,216 1054,227 1096,246 1120,251 1138,252 1174,251 1222,247 1264,244 1312,242 1391,240' }
    ]
});
```
